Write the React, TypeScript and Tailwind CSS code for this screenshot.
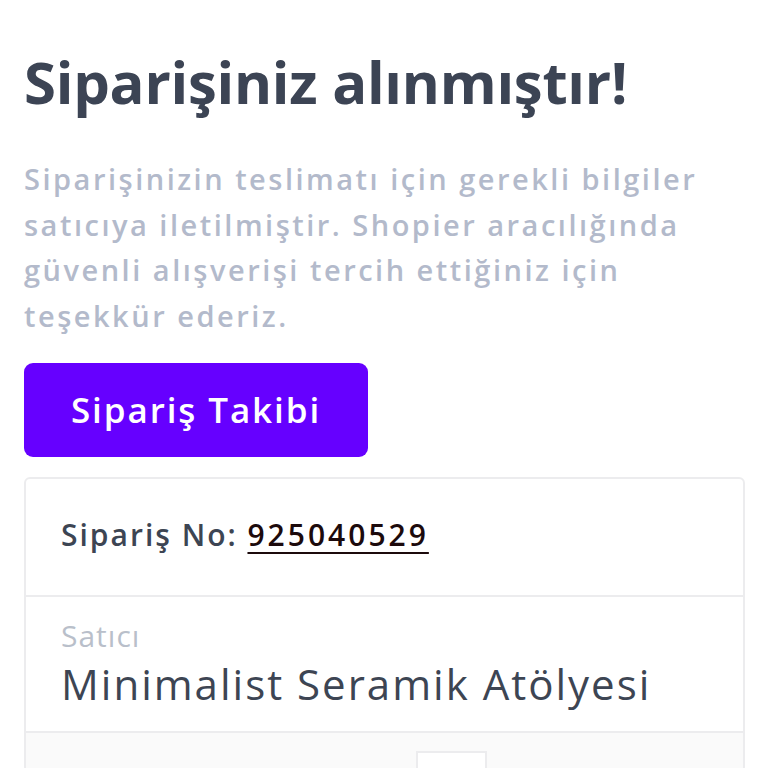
export default function App() {
  return (
    <div className="min-h-[768px] bg-white px-6 pt-[50px] font-['Open_Sans',_'Noto_Sans',_sans-serif]">
      <h1 className="whitespace-nowrap text-[58px] font-bold leading-[64px] tracking-[-0.25px] text-[#3c4454]">Siparişiniz alınmıştır!</h1>
      <p className="mt-[42px] whitespace-nowrap text-[29px] font-semibold leading-[45.5px] tracking-[2.5px] text-[#b3bacb]">
        Siparişinizin teslimatı için gerekli bilgiler
        <br />
        satıcıya iletilmiştir. Shopier aracılığında
        <br />
        güvenli alışverişi tercih ettiğiniz için
        <br />
        teşekkür ederiz.
      </p>
      <button className="mt-[25px] flex h-[94px] w-[344px] items-center justify-center rounded-[9px] bg-[#6600ff] text-[35px] font-semibold tracking-[1.9px] text-white">
        Sipariş Takibi
      </button>
      <div className="mt-[20px] w-[721px] rounded-[6px] border-2 border-[#ececee]">
        <div className="flex whitespace-nowrap px-[35px] pt-[36px] pb-[40px] text-[30px] font-semibold leading-[40px] text-[#3d4553]">
          <span className="tracking-[2px]">Sipariş No:&nbsp;</span>
          <span className="tracking-[3px] text-[#1c0a0c] underline decoration-2 underline-offset-[6px]">925040529</span>
        </div>
        <div className="whitespace-nowrap border-t-2 border-[#ececee] px-[35px] pt-[19px] pb-[22px]">
          <div className="text-[30px] font-medium leading-[40px] tracking-[1px] text-[#b9bfca]">Satıcı</div>
          <div className="mt-[3px] text-[42px] font-medium leading-[50px] tracking-[2px] text-[#3d4553]">Minimalist Seramik Atölyesi</div>
        </div>
        <div className="h-[40px] border-t-2 border-[#ececee] bg-[#fafafa] pl-[390px] pt-[18px]">
          <div className="h-[30px] w-[71px] border-2 border-b-0 border-[#ececee] bg-white"></div>
        </div>
      </div>
    </div>
  );
}
